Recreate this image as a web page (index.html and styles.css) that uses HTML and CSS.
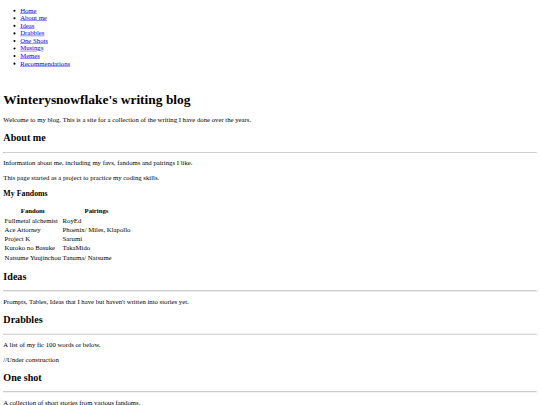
FILE: index.html
```html
<!DOCTYPE html>
<html class="root">
<head>
<meta charset="utf-8">
<title>Winterysnowflake's writing blog</title>
<link rel="stylesheet" href="styles.css">
</head>
<body class="page">
<div class="canvas">
<nav class="nav">
<ul class="nav-list">
<li><a href="#home">Home</a></li>
<li><a href="#about">About me</a></li>
<li><a href="#ideas">Ideas</a></li>
<li><a href="#drabbles">Drabbles</a></li>
<li><a href="#oneshots">One Shots</a></li>
<li><a href="#musings">Musings</a></li>
<li><a href="#memes">Memes</a></li>
<li><a href="#recs">Recommendations</a></li>
</ul>
</nav>
<div class="spacer"></div>
<h1 class="title">Winterysnowflake's writing blog</h1>
<p class="text">Welcome to my blog. This is a site for a collection of the writing I have done over the years.</p>
<h2 class="section">About me</h2>
<hr class="rule">
<p class="text">Information about me, including my favs, fandoms and pairings I like.</p>
<p class="text">This page started as a project to practice my coding skills.</p>
<h3 class="sub">My Fandoms</h3>
<table class="fandoms">
<tr><th>Fandom</th><th>Pairings</th></tr>
<tr><td>Fullmetal alchemist</td><td>RoyEd</td></tr>
<tr><td>Ace Attorney</td><td>Phoenix/ Miles, Klapollo</td></tr>
<tr><td>Project K</td><td>Sarumi</td></tr>
<tr><td>Kuroko no Basuke</td><td>TakaMido</td></tr>
<tr><td>Natsume Yuujinchou</td><td>Tanuma/ Natsume</td></tr>
</table>
<h2 class="section">Ideas</h2>
<hr class="rule">
<p class="text">Prompts, Tables, Ideas that I have but haven't written into stories yet.</p>
<h2 class="section">Drabbles</h2>
<hr class="rule">
<p class="text">A list of my fic 100 words or below.</p>
<p class="text">//Under construction</p>
<h2 class="section">One shot</h2>
<hr class="rule">
<p class="text">A collection of short stories from various fandoms.</p>
</div>
</body>
</html>
```
FILE: styles.css
```css
.root {
  overflow: hidden;
  background: #fff;
}
.page {
  margin: 0;
  overflow: hidden;
}
.canvas {
  display: flow-root;
  width: 1270px;
  padding: 0 8px;
  transform: scale(0.42);
  transform-origin: 0 0;
  font-family: "Liberation Serif", "Times New Roman", serif;
  font-size: 16px;
  color: #000;
}
.nav-list {
  margin: 16px 0;
  padding-left: 40px;
}
.nav-list a {
  color: #0000ee;
  text-decoration: underline;
}
.spacer {
  height: 21px;
}
.title {
  font-size: 32px;
  margin: 21.44px 0;
}
.section {
  font-size: 24px;
  margin: 19.92px 0;
}
.sub {
  font-size: 18.72px;
  margin: 18.72px 0;
}
.text {
  margin: 16px 0;
}
.rule {
  margin: 8px 0;
  border: 1px inset #d4d4d4;
  height: 0;
}
.fandoms {
  border-spacing: 2px;
  font-size: 16px;
}
.fandoms th, .fandoms td {
  padding: 1px;
}
.fandoms th {
  text-align: center;
  font-weight: bold;
}
.fandoms td {
  text-align: left;
}
```
